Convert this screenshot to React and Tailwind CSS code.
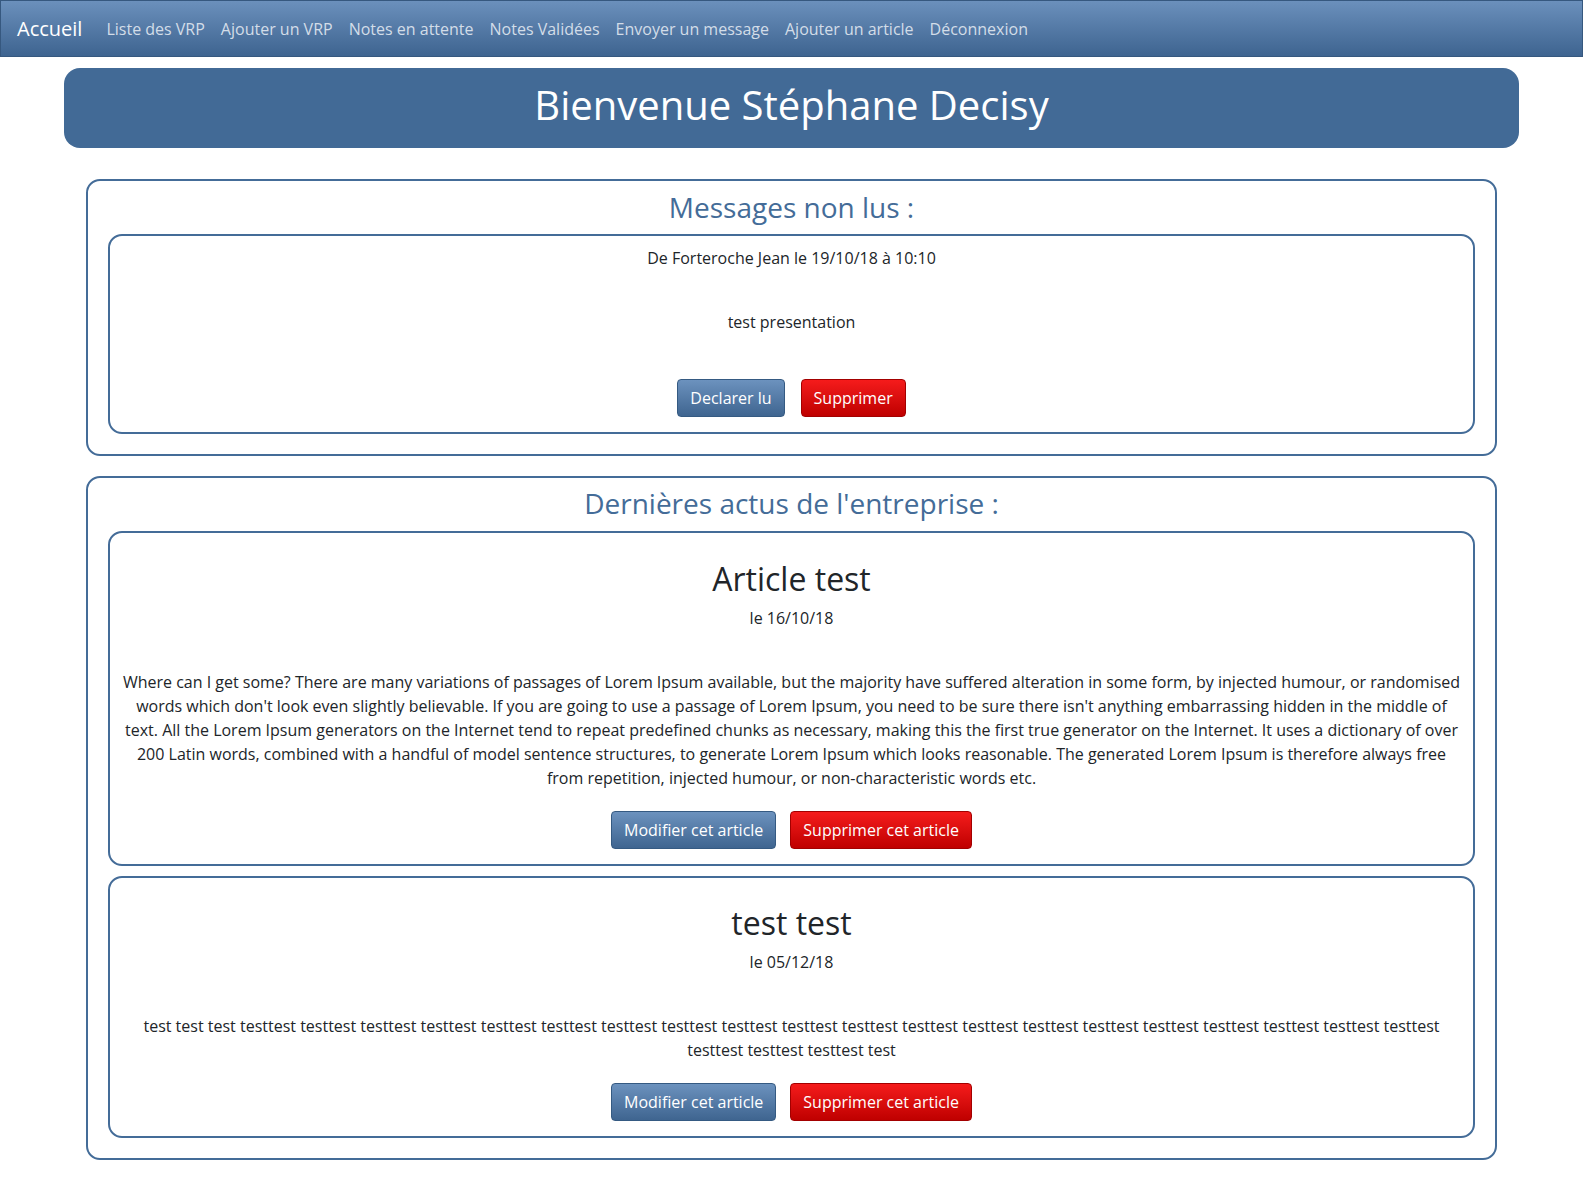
import React from "react";

const navLinks = [
  "Liste des VRP",
  "Ajouter un VRP",
  "Notes en attente",
  "Notes Validées",
  "Envoyer un message",
  "Ajouter un article",
  "Déconnexion",
];

const articles = [
  {
    id: 1,
    title: "Article test",
    date: "le 16/10/18",
    content:
      "Where can I get some? There are many variations of passages of Lorem Ipsum available, but the majority have suffered alteration in some form, by injected humour, or randomised words which don't look even slightly believable. If you are going to use a passage of Lorem Ipsum, you need to be sure there isn't anything embarrassing hidden in the middle of text. All the Lorem Ipsum generators on the Internet tend to repeat predefined chunks as necessary, making this the first true generator on the Internet. It uses a dictionary of over 200 Latin words, combined with a handful of model sentence structures, to generate Lorem Ipsum which looks reasonable. The generated Lorem Ipsum is therefore always free from repetition, injected humour, or non-characteristic words etc.",
  },
  {
    id: 2,
    title: "test test",
    date: "le 05/12/18",
    content:
      "test test test testtest testtest testtest testtest testtest testtest testtest testtest testtest testtest testtest testtest testtest testtest testtest testtest testtest testtest testtest testtest testtest testtest testtest test",
  },
];

// boutons style bootstrap
const blueBtn =
  "px-3 py-[6px] text-[16px] leading-6 text-white rounded border border-[#355a82] bg-gradient-to-b from-[#6c92be] to-[#3f6590]";
const redBtn =
  "px-3 py-[6px] text-[16px] leading-6 text-white rounded border border-[#a30000] bg-gradient-to-b from-[#f51b1b] to-[#bf0000]";

function App() {
  return (
    <div className="min-h-[1190px] bg-white text-[#212529] font-['Open_Sans',sans-serif]">
      {/* Navbar */}
      <nav className="h-[57px] flex items-center px-4 border border-[#36587f] bg-gradient-to-b from-[#6b90bc] to-[#3e6490]">
        <span className="text-[20px] text-white mr-4">Accueil</span>
        {navLinks.map((link) => (
          <a key={link} className="px-2 text-[16px] text-[#d3dde8]">
            {link}
          </a>
        ))}
      </nav>

      {/* Jumbotron */}
      <div className="mx-[64px] mt-[11px] h-[80px] pb-[7px] rounded-2xl bg-[#426a96] flex items-center justify-center">
        <h1 className="text-[40px] text-white">Bienvenue Stéphane Decisy</h1>
      </div>

      {/* Messages */}
      <section className="mx-[86px] mt-[31px] border-2 border-[#446c98] rounded-[14px] px-5 pb-5 pt-[9px]">
        <h3 className="text-[28px] leading-[34px] text-[#446c98] text-center mb-[10px]">
          Messages non lus :
        </h3>
        <div className="border-2 border-[#446c98] rounded-[14px] pt-[10px] pb-[15px] text-center">
          <p className="leading-6">De Forteroche Jean le 19/10/18 à 10:10</p>
          <p className="leading-6 mt-[40px]">test presentation</p>
          <div className="mt-[45px] flex justify-center gap-4">
            <button className={blueBtn}>Declarer lu</button>
            <button className={redBtn}>Supprimer</button>
          </div>
        </div>
      </section>

      {/* Articles */}
      <section className="mx-[86px] mt-[20px] border-2 border-[#446c98] rounded-[14px] px-5 pb-5 pt-[8px]">
        <h3 className="text-[28px] leading-[34px] text-[#446c98] text-center mb-[11px]">
          Dernières actus de l'entreprise :
        </h3>
        <div className="flex flex-col gap-[10px]">
          {articles.map((a, i) => (
            <div
              key={a.id}
              className={
                "border-2 border-[#446c98] rounded-[14px] pb-[15px] px-2 text-center " +
                (i === 0 ? "pt-[26px]" : "pt-[25px]")
              }
            >
              <h2 className="text-[32px] leading-[40px]">{a.title}</h2>
              <p className="leading-6 mt-[7px]">{a.date}</p>
              <p className="leading-6 mt-[40px]">{a.content}</p>
              <div className="mt-[21px] flex justify-center gap-[14px]">
                <button className={blueBtn}>Modifier cet article</button>
                <button className={redBtn}>Supprimer cet article</button>
              </div>
            </div>
          ))}
        </div>
      </section>
    </div>
  );
}

export default App;
